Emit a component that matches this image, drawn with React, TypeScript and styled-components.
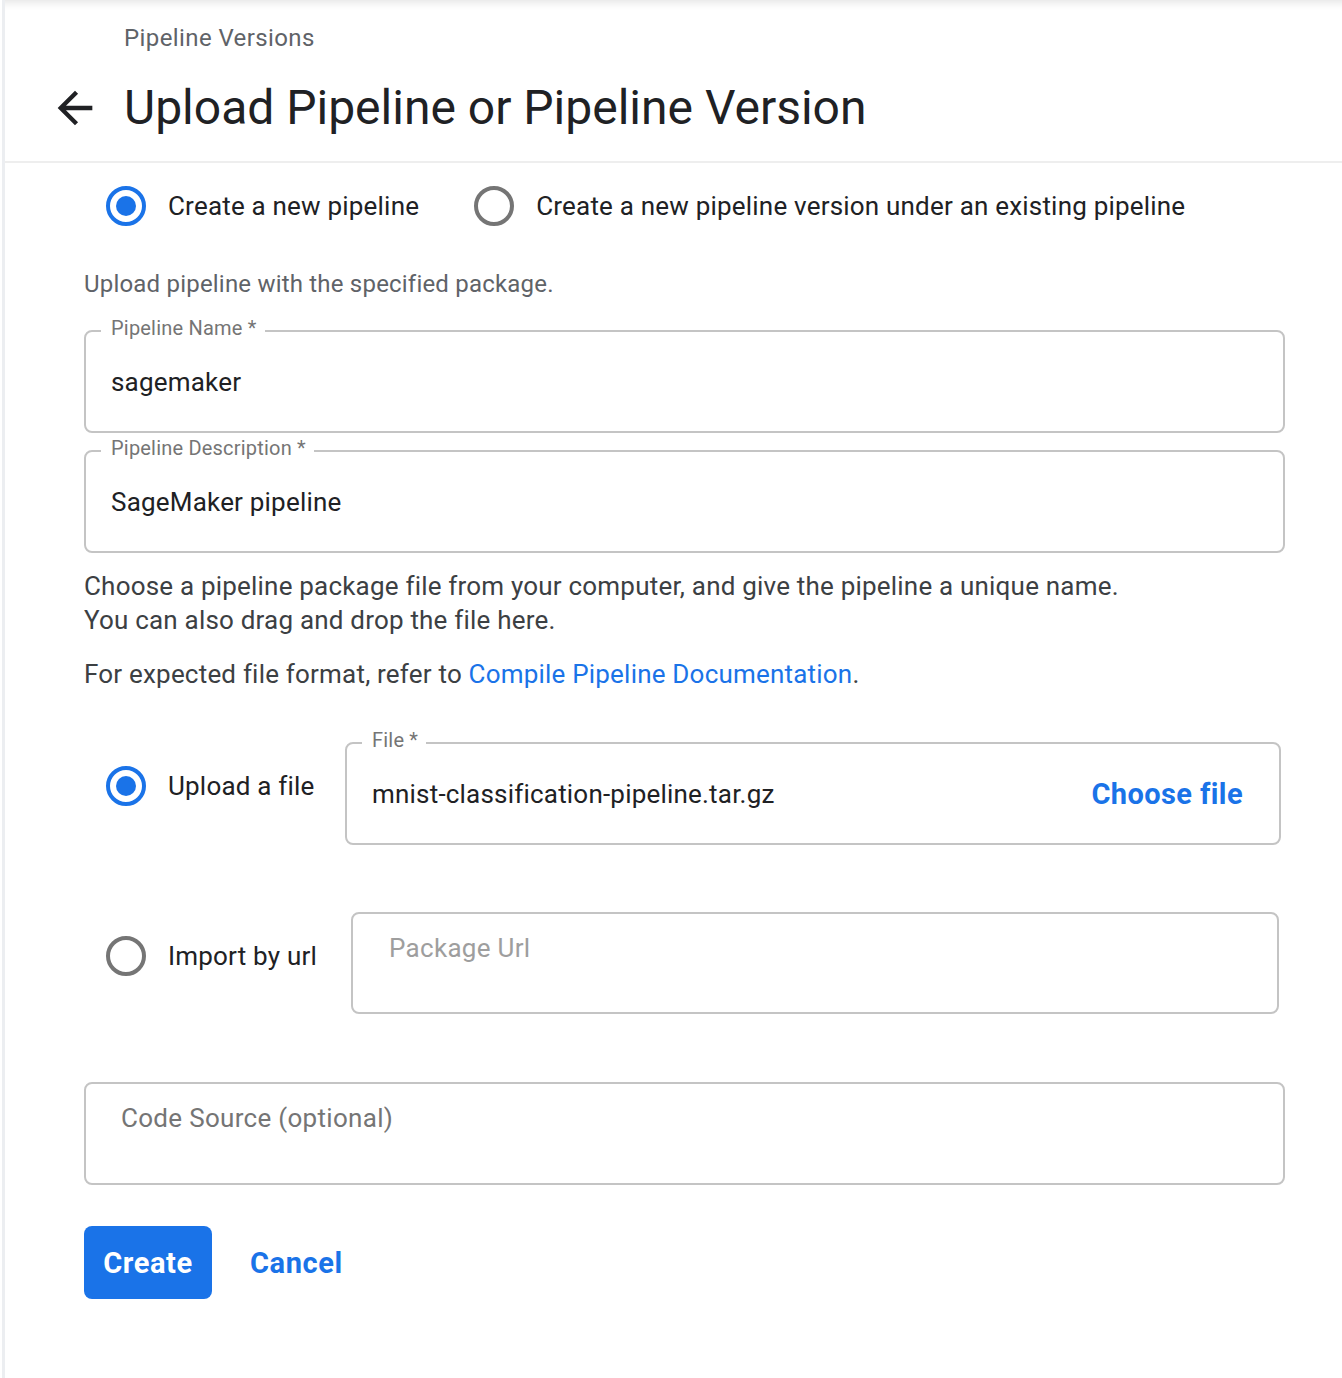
import React from "react";
import styled, { createGlobalStyle } from "styled-components";

const Global = createGlobalStyle`
  html, body { margin: 0; padding: 0; background: #fff; }
  body { font-family: Roboto, "Open Sans", "Liberation Sans", sans-serif; color: #202124; }
  * { box-sizing: border-box; }
`;

const Page = styled.div`
  padding-left: 2px;
  min-height: 1378px;
`;

const Main = styled.main`
  min-height: 1378px;
  border-left: 3px solid #eceef1;
  box-shadow: inset 0 12px 10px -10px rgba(0, 0, 0, 0.12);
`;

const Header = styled.header`
  height: 163px;
  padding: 24px 0 0 44px;
  border-bottom: 2px solid #eeeeee;
`;

const Breadcrumb = styled.div`
  margin-left: 75px;
  font-size: 24px;
  line-height: 28px;
  letter-spacing: 0.4px;
  color: #5f6368;
`;

const TitleRow = styled.div`
  display: flex;
  align-items: center;
  gap: 23px;
  margin-top: 28px;
  height: 56px;
`;

const BackButton = styled.button`
  width: 52px;
  height: 52px;
  border: 0;
  padding: 0;
  background: transparent;
  display: flex;
  align-items: center;
  justify-content: center;
  color: #202124;
  cursor: pointer;
`;

const Title = styled.h1`
  margin: 0;
  font-size: 48px;
  line-height: 56px;
  font-weight: 400;
  color: #202124;
`;

const Content = styled.div`
  padding: 19px 57px 40px 79px;
`;

const RadioGroup = styled.div`
  display: flex;
  align-items: center;
  gap: 55px;
  padding-left: 22px;
  height: 48px;
`;

const RadioLabel = styled.label<{ $width?: number; $offset?: number }>`
  display: flex;
  align-items: center;
  gap: 22px;
  height: 48px;
  font-size: 26px;
  letter-spacing: 0.2px;
  color: #202124;
  cursor: pointer;
  ${(p) => (p.$width ? `width: ${p.$width}px; flex: none;` : "")}
  ${(p) => (p.$offset ? `padding-left: ${p.$offset}px; margin-top: 20px;` : "")}
`;

const RadioRing = styled.span<{ $checked?: boolean }>`
  width: 40px;
  height: 40px;
  border-radius: 50%;
  border: 4px solid ${(p) => (p.$checked ? "#1a73e8" : "#757575")};
  display: flex;
  align-items: center;
  justify-content: center;
  flex: none;
  &::after {
    content: "";
    width: 20px;
    height: 20px;
    border-radius: 50%;
    background: ${(p) => (p.$checked ? "#1a73e8" : "transparent")};
  }
`;

const Hint = styled.p`
  margin: 40px 0 0;
  font-size: 24px;
  line-height: 28px;
  letter-spacing: 0.2px;
  color: #5f6368;
`;

const FieldBox = styled.div<{ $mt: number; $width?: number }>`
  position: relative;
  margin-top: ${(p) => p.$mt}px;
  height: 103px;
  ${(p) => (p.$width ? `width: ${p.$width}px;` : "width: 100%;")}
  border: 2px solid #c4c4c4;
  border-radius: 8px;
  display: flex;
  align-items: center;
  padding: 0 36px 0 25px;
  flex: none;
`;

const FieldLabel = styled.span`
  position: absolute;
  top: -15px;
  left: 15px;
  padding: 0 8px 0 10px;
  background: #fff;
  font-size: 20px;
  line-height: 22px;
  letter-spacing: 0.2px;
  color: #757575;
`;

const Value = styled.span`
  flex: 1;
  font-size: 26px;
  line-height: 32px;
  letter-spacing: 0.2px;
  color: #202124;
`;

const ChooseFile = styled.button`
  border: 0;
  background: transparent;
  padding: 0;
  font-family: inherit;
  font-size: 29px;
  letter-spacing: 0.4px;
  font-weight: 700;
  color: #1a73e8;
  cursor: pointer;
`;

const PlainBox = styled.div<{ $mt: number; $width?: number; $pl: number; $color: string }>`
  margin-top: ${(p) => p.$mt}px;
  height: ${(p) => (p.$width ? 102 : 103)}px;
  ${(p) => (p.$width ? `width: ${p.$width}px; flex: none;` : "width: 100%;")}
  border: 2px solid #c4c4c4;
  border-radius: 8px;
  padding: 18px 0 0 ${(p) => p.$pl}px;
  font-size: 26px;
  line-height: 32px;
  letter-spacing: 0.3px;
  color: ${(p) => p.$color};
`;

const Desc = styled.div`
  margin-top: 16px;
  font-size: 26px;
  line-height: 34px;
  letter-spacing: 0.2px;
  color: #3c4043;
  p {
    margin: 0;
  }
  p + p {
    margin-top: 20px;
  }
`;

const Link = styled.a`
  color: #1a73e8;
  text-decoration: none;
`;

const SourceRow = styled.div<{ $mt: number }>`
  display: flex;
  align-items: flex-start;
  margin-top: ${(p) => p.$mt}px;
  height: 103px;
`;

const Actions = styled.div`
  display: flex;
  align-items: center;
  gap: 38px;
  margin-top: 41px;
`;

const PrimaryButton = styled.button`
  width: 128px;
  height: 73px;
  border: 0;
  border-radius: 8px;
  background: #1a73e8;
  color: #fff;
  font-family: inherit;
  font-size: 29px;
  letter-spacing: 0.6px;
  font-weight: 700;
  cursor: pointer;
`;

const TextButton = styled.button`
  border: 0;
  background: transparent;
  padding: 0;
  font-family: inherit;
  font-size: 29px;
  letter-spacing: 0.6px;
  font-weight: 700;
  color: #1a73e8;
  cursor: pointer;
`;

export default function App() {
  return (
    <Page>
      <Global />
      <Main>
        <Header>
          <Breadcrumb>Pipeline Versions</Breadcrumb>
          <TitleRow>
            <BackButton aria-label="Back">
              <svg width="52" height="52" viewBox="0 0 24 24" fill="currentColor">
                <path d="M20 11H7.83l5.59-5.59L12 4l-8 8 8 8 1.41-1.41L7.83 13H20v-2z" />
              </svg>
            </BackButton>
            <Title>Upload Pipeline or Pipeline Version</Title>
          </TitleRow>
        </Header>
        <Content>
          <RadioGroup>
            <RadioLabel>
              <RadioRing $checked />
              Create a new pipeline
            </RadioLabel>
            <RadioLabel>
              <RadioRing />
              Create a new pipeline version under an existing pipeline
            </RadioLabel>
          </RadioGroup>

          <Hint>Upload pipeline with the specified package.</Hint>

          <FieldBox $mt={32}>
            <FieldLabel>Pipeline Name *</FieldLabel>
            <Value>sagemaker</Value>
          </FieldBox>
          <FieldBox $mt={17}>
            <FieldLabel>Pipeline Description *</FieldLabel>
            <Value>SageMaker pipeline</Value>
          </FieldBox>

          <Desc>
            <p>
              Choose a pipeline package file from your computer, and give the pipeline a unique name.
              <br />
              You can also drag and drop the file here.
            </p>
            <p>
              For expected file format, refer to <Link href="#">Compile Pipeline Documentation</Link>.
            </p>
          </Desc>

          <SourceRow $mt={51}>
            <RadioLabel $width={261} $offset={22}>
              <RadioRing $checked />
              Upload a file
            </RadioLabel>
            <FieldBox $mt={0} $width={936}>
              <FieldLabel>File *</FieldLabel>
              <Value>mnist-classification-pipeline.tar.gz</Value>
              <ChooseFile>Choose file</ChooseFile>
            </FieldBox>
          </SourceRow>

          <SourceRow $mt={67}>
            <RadioLabel $width={267} $offset={22}>
              <RadioRing />
              Import by url
            </RadioLabel>
            <PlainBox $mt={0} $width={928} $pl={36} $color="#9e9e9e">
              Package Url
            </PlainBox>
          </SourceRow>

          <PlainBox $mt={67} $pl={35} $color="#757575">
            Code Source (optional)
          </PlainBox>

          <Actions>
            <PrimaryButton>Create</PrimaryButton>
            <TextButton>Cancel</TextButton>
          </Actions>
        </Content>
      </Main>
    </Page>
  );
}
